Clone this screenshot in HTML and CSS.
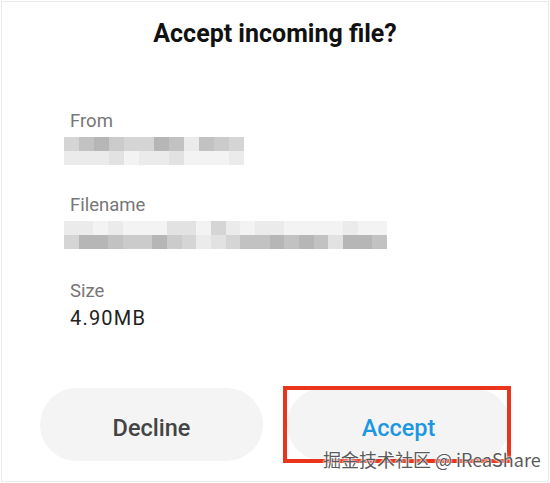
FILE: index.html
```html
<!DOCTYPE html>
<html>
<head>
<meta charset="utf-8">
<link rel="stylesheet" href="styles.css">
</head>
<body>
<div class="dialog">
  <h1 class="title">Accept incoming file?</h1>
  <div class="fields">
    <div class="field">
      <div class="label">From</div>
      <div class="blur">
        <div class="row"><i class="g4"></i><i class="g2"></i><i class="g1"></i><i class="g3"></i><i class="g4"></i><i class="g4"></i><i class="g1"></i><i class="g2"></i><i class="g6"></i><i class="g2"></i><i class="g3"></i><i class="g4"></i></div>
        <div class="row"><i class="g6"></i><i class="g6"></i><i class="g6"></i><i class="g5"></i><i class="g7"></i><i class="g6"></i><i class="g6"></i><i class="g5"></i><i class="g7"></i><i class="g7"></i><i class="g7"></i><i class="g6"></i></div>
      </div>
    </div>
    <div class="field">
      <div class="label">Filename</div>
      <div class="blur long">
        <div class="row"><i class="g6"></i><i class="g6"></i><i class="g7"></i><i class="g6"></i><i class="g7"></i><i class="g7"></i><i class="g7"></i><i class="g5"></i><i class="g5"></i><i class="g7"></i><i class="g4"></i><i class="g6"></i><i class="g7"></i><i class="g6"></i><i class="g6"></i><i class="g7"></i><i class="g7"></i><i class="g7"></i><i class="g7"></i><i class="g6"></i><i class="g7"></i><i class="g7"></i></div>
        <div class="row"><i class="g4"></i><i class="g1"></i><i class="g1"></i><i class="g2"></i><i class="g3"></i><i class="g3"></i><i class="g1"></i><i class="g3"></i><i class="g4"></i><i class="g6"></i><i class="g5"></i><i class="g4"></i><i class="g2"></i><i class="g2"></i><i class="g1"></i><i class="g2"></i><i class="g1"></i><i class="g2"></i><i class="g5"></i><i class="g1"></i><i class="g1"></i><i class="g2"></i></div>
      </div>
    </div>
    <div class="field">
      <div class="label">Size</div>
      <div class="value">4.90MB</div>
    </div>
  </div>
  <div class="actions">
    <button class="btn decline">Decline</button>
    <button class="btn accept">Accept</button>
  </div>
  <div class="highlight"></div>
  <div class="watermark">掘金技术社区 @ iReaShare</div>
</div>
</body>
</html>
```

FILE: styles.css
```css
html, body {
  margin: 0;
  padding: 0;
  background: #ffffff;
}
body {
  font-family: Roboto, "Noto Sans", "Liberation Sans", sans-serif;
}
.dialog {
  position: relative;
  box-sizing: border-box;
  width: 548px;
  height: 481px;
  margin: 1px 0 0 1px;
  border: 1px solid #e9e9e9;
  display: flex;
  flex-direction: column;
}
.title {
  margin: 17px 0 0 0;
  font-size: 25px;
  line-height: 30px;
  font-weight: 700;
  color: #111111;
  text-align: center;
}
.fields {
  display: flex;
  flex-direction: column;
  gap: 28px;
  margin-top: 60px;
  padding-left: 68px;
}
.field {
  display: flex;
  flex-direction: column;
  gap: 4px;
}
.field:last-child {
  margin-top: 2px;
  gap: 2px;
}
.label {
  font-size: 18.5px;
  line-height: 24px;
  color: #777777;
}
.value {
  font-size: 20px;
  line-height: 26px;
  color: #222222;
  letter-spacing: 1.2px;
}
.blur {
  display: flex;
  flex-direction: column;
  margin-left: -6px;
  filter: blur(0.6px);
}
.row {
  display: flex;
  height: 14px;
}
.row i {
  display: block;
  width: 15px;
  height: 14px;
}
.long .row i {
  width: 14.7px;
}
.g1 { background: #b6b6b6; }
.g2 { background: #c2c2c2; }
.g3 { background: #cbcbcb; }
.g4 { background: #d5d5d5; }
.g5 { background: #e2e2e2; }
.g6 { background: #ebebeb; }
.g7 { background: #f3f3f3; }
.actions {
  display: flex;
  gap: 24px;
  margin-top: auto;
  margin-bottom: 20px;
  padding-left: 38px;
}
.btn {
  width: 223px;
  height: 73px;
  border: none;
  border-radius: 37px;
  background: #f4f4f4;
  font-family: Roboto, "Noto Sans", "Liberation Sans", sans-serif;
  font-size: 23.5px;
  font-weight: 500;
  padding: 7px 0 0 0;
}
.decline {
  color: #444444;
}
.accept {
  color: #1c98e0;
}
.highlight {
  position: absolute;
  left: 281px;
  top: 384px;
  width: 220px;
  height: 69px;
  border: 4px solid #e8351c;
}
.watermark {
  position: absolute;
  left: 321px;
  top: 444px;
  font-family: "Noto Sans CJK SC", "Noto Sans", sans-serif;
  font-size: 18px;
  line-height: 26px;
  color: #5a5a5a;
  text-shadow: 0 0 2px #ffffff, 0 0 2px #ffffff, 0 0 1px #ffffff;
  white-space: nowrap;
}
```
